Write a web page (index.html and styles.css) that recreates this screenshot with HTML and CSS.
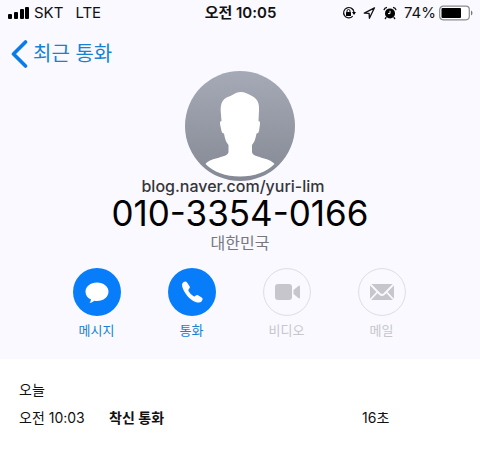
FILE: index.html
```html
<!DOCTYPE html>
<html lang="ko">
<head>
<meta charset="utf-8">
<meta name="viewport" content="width=device-width, initial-scale=1">
<title>최근 통화</title>
<link rel="stylesheet" href="styles.css">
</head>
<body>
<header class="contact">
  <div class="status">
    <div class="status-left">
      <svg class="signal" width="22" height="14" viewBox="0 0 22 14" aria-hidden="true">
        <rect x="0" y="8" width="4" height="5" rx="1"/><rect x="6" y="6" width="4" height="7" rx="1"/><rect x="12" y="3" width="4" height="10" rx="1"/><rect x="17" y="1" width="4" height="12" rx="1"/>
      </svg>
      <span class="carrier">SKT</span>
      <span>LTE</span>
    </div>
    <div class="clock">오전 10:05</div>
    <div class="status-right">
      <svg width="14" height="14" viewBox="0 0 14 14" aria-hidden="true">
        <path d="M10.7 10.2A5.2 5.2 0 1 1 12 6.3" fill="none" stroke="#111" stroke-width="1.2"/>
        <path d="M10 6h4l-2 3z"/>
        <rect x="4" y="6" width="5" height="4" rx=".5"/>
        <path d="M5 6.2V5a1.5 1.5 0 0 1 3 0v1.2" fill="none" stroke="#111"/>
      </svg>
      <svg width="13" height="14" viewBox="0 0 13 14" aria-hidden="true">
        <path d="M11.5 1.8 1.3 7.1l4.8.2.3 5z" fill="none" stroke="#111" stroke-width="1.3" stroke-linejoin="round"/>
      </svg>
      <svg width="14" height="14" viewBox="0 0 14 14" aria-hidden="true">
        <circle cx="7" cy="7.4" r="5"/>
        <path d="M.9 4.2A4 4 0 0 1 4 1.3M10 1.3a4 4 0 0 1 3.1 2.9M3.3 11.2 2 13m8.7-1.8L12 13" fill="none" stroke="#111" stroke-width="1.3"/>
        <path d="M7 4.8v2.800H5" fill="none" stroke="#fff"/>
      </svg>
      <span>74%</span>
      <svg class="battery" width="34" height="16" viewBox="0 0 34 16" aria-hidden="true">
        <rect x=".7" y="1.2" width="29.6" height="13.6" rx="3.5" fill="#fff" stroke="#8b8b8f" stroke-width="1.2"/>
        <rect x="2.5" y="3" width="19.5" height="10" rx="1"/>
        <path d="M32 5.5v5q1.5-.8 1.5-2.5T32 5.5" fill="#77777b"/>
      </svg>
    </div>
  </div>
  <a class="back" href="#">
    <svg width="17" height="28" viewBox="0 0 17 28" aria-hidden="true"><path d="M14.5 2 2.5 14l12 12" fill="none" stroke="#087dea" stroke-width="3.6" stroke-linecap="round" stroke-linejoin="round"/></svg>
    <span>최근 통화</span>
  </a>
  <svg class="avatar" width="110" height="110" viewBox="0 0 110 110" role="img" aria-label="프로필">
    <defs><linearGradient id="shade" x2="0" y2="1"><stop offset="0" stop-color="#a5aab6"/><stop offset="1" stop-color="#858994"/></linearGradient></defs>
    <circle cx="55" cy="55" r="55" fill="url(#shade)"/>
    <path d="M55.500 21C51 21 48 24 44 25.500 37 28 35.500 33 35.700 40L36.500 50Q34.700 50 35 53L36.500 60Q37 62.500 39 62.500C40 68 41 71 43.500 74V81C43 87 26 86 20.500 93C28 101 41 105.500 55 105.500S82 101 89.500 93C84 86 67.500 87 67 81V74C69.500 71 70.500 68 71.500 62.500Q73.500 62.500 74 60L75 53Q75.300 50 73.500 50L74 40C74.500 33 73 28 67 25C63 23 60 21 55.500 21Z" fill="#fff"/>
  </svg>
  <p class="watermark">blog.naver.com/yuri-lim</p>
  <h1 class="number">010-3354-0166</h1>
  <p class="country">대한민국</p>
  <nav class="actions">
    <button class="action" type="button">
      <svg width="48" height="48" viewBox="0 0 48 48" aria-hidden="true"><circle cx="24" cy="24" r="24" fill="#087dfa"/><path d="M24 14.500c6.500 0 11.500 4.100 11.500 9.200S30.500 33 24 33q-1.500 0-2.700-.2-2 2.100-4.800 2.200 1.400-1.400 1.500-3.400c-3.300-1.500-5.500-4.500-5.500-7.900 0-5.100 5-9.200 11.500-9.200Z" fill="#fff"/></svg>
      <span>메시지</span>
    </button>
    <button class="action" type="button">
      <svg width="48" height="48" viewBox="0 0 48 48" aria-hidden="true"><circle cx="24" cy="24" r="24" fill="#087dfa"/><path d="M14.300 15.500Q15.500 13.300 17.500 13.400Q18.300 13.500 19 14.500L21.600 18.300Q22.300 19.500 21.300 20.600Q20 21.800 20.500 22.900Q22.300 26.200 25.600 28.300Q26.600 28.800 27.800 27.600Q28.900 26.600 30 27.300L33.700 29.600Q35 30.500 34.500 31.700Q33.600 34.500 31 34.600C26.500 34.600 21.500 31 18.300 26.500C15.500 22.600 13.300 18 14.300 15.500Z" fill="#fff"/></svg>
      <span>통화</span>
    </button>
    <button class="action" type="button" disabled>
      <svg width="48" height="48" viewBox="0 0 48 48" aria-hidden="true"><circle cx="24" cy="24" r="23.400" fill="none" stroke="#dedde3"/><rect x="12" y="16" width="17" height="16" rx="3" fill="#c7c6cd"/><path d="M30.500 22 36 17.500q1 0 1 1v11q0 1-1 1L30.500 26z" fill="#c7c6cd"/></svg>
      <span>비디오</span>
    </button>
    <button class="action" type="button" disabled>
      <svg width="48" height="48" viewBox="0 0 48 48" aria-hidden="true"><circle cx="24" cy="24" r="23.400" fill="none" stroke="#dedde3"/><rect x="12" y="16" width="24" height="16" fill="#c7c6cd"/><path d="m12 16 9.800 10q2.200 2 4.400 0L36 16M12 32l7.500-8M36 32l-7.500-8" fill="none" stroke="#f9f9ff" stroke-width="1.800"/></svg>
      <span>메일</span>
    </button>
  </nav>
</header>
<main class="log">
  <h2>오늘</h2>
  <div class="call">
    <span class="time">오전 10:03</span>
    <strong>착신 통화</strong>
    <span class="duration">16초</span>
  </div>
</main>
</body>
</html>
```
FILE: styles.css
```css
* { box-sizing: border-box; }
body {
  margin: 0;
  background: #fff;
  color: #111;
  font-family: Inter, "Noto Sans CJK KR", sans-serif;
}
h1, h2, p { margin: 0; font-weight: 400; }
svg { display: block; flex: none; }
.contact {
  background: #f9f9ff;
  padding-bottom: 19px;
  text-align: center;
}
.status {
  display: grid;
  grid-template-columns: 1fr auto 1fr;
  align-items: center;
  height: 26px;
  padding: 0 7px 0 8px;
  font-size: 15px;
  line-height: 20px;
}
.status-left, .status-right { display: flex; align-items: center; }
.status-left { gap: 4px; }
.carrier { margin-right: 8px; }
.status-right { justify-content: flex-end; gap: 7px; }
.battery { margin-left: -4px; }
.clock { font-weight: 600; }
.back {
  display: flex;
  align-items: center;
  gap: 5px;
  width: fit-content;
  height: 32px;
  margin: 12px 0 0 11px;
  color: #1683d2;
  font-size: 20px;
  line-height: 32px;
  text-decoration: none;
}
.avatar { margin: 1px auto 0; }
.watermark {
  position: relative;
  margin-top: -5px;
  padding-right: 14px;
  color: #35353a;
  font-size: 16px;
  font-weight: 500;
  line-height: 20px;
}
.number {
  color: #000;
  font-size: 35px;
  line-height: 34px;
}
.country {
  color: #77777c;
  font-size: 16px;
  line-height: 26px;
}
.actions {
  display: grid;
  grid-template-columns: repeat(4, 1fr);
  margin-top: 12px;
  padding: 0 51px 0 49px;
}
.action {
  display: flex;
  flex-direction: column;
  align-items: center;
  gap: 4px;
  padding: 0;
  border: 0;
  background: none;
  color: #1683d2;
  font: inherit;
  font-size: 13px;
  line-height: 20px;
}
.action:disabled { color: #c7c6cd; }
.log {
  padding: 19px;
  font-size: 14px;
}
.log h2 { font-size: 14px; line-height: 24px; }
.call {
  display: grid;
  grid-template-columns: 90px 1fr 99px;
  margin-top: 4px;
  line-height: 24px;
}
.call strong { font-weight: 600; }
```
